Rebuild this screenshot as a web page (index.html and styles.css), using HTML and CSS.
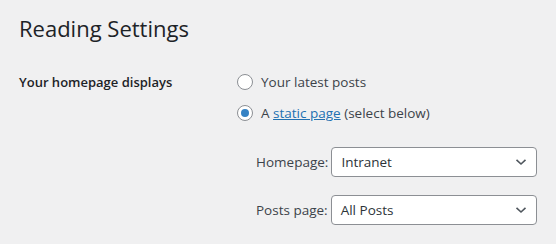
FILE: index.html
```html
<!DOCTYPE html>
<html lang="en">

<head>
    <meta charset="UTF-8">
    <meta name="viewport" content="width=device-width, initial-scale=1.0">
    <title>Reading Settings</title>
    <link rel="stylesheet" href="styles.css">
</head>

<body>
    <div class="wrap">
        <h1>Reading Settings</h1>
        <div class="form-row">
            <div class="row-label">Your homepage displays</div>
            <div class="row-field">
                <label class="choice">
                    <span class="radio"></span>
                    Your latest posts
                </label>
                <label class="choice">
                    <span class="radio checked"></span>
                    <span>A <a href="#">static page</a> (select below)</span>
                </label>
                <div class="page-selects">
                    <div class="select-row">
                        <span class="select-label">Homepage:</span>
                        <div class="select">
                            <span>Intranet</span>
                            <svg width="12" height="8" viewBox="0 0 12 8"><path d="M1.5 1.8 L6 6 L10.5 1.8" fill="none" stroke="#50575e" stroke-width="1.6"/></svg>
                        </div>
                    </div>
                    <div class="select-row">
                        <span class="select-label">Posts page:</span>
                        <div class="select">
                            <span>All Posts</span>
                            <svg width="12" height="8" viewBox="0 0 12 8"><path d="M1.5 1.8 L6 6 L10.5 1.8" fill="none" stroke="#50575e" stroke-width="1.6"/></svg>
                        </div>
                    </div>
                </div>
            </div>
        </div>
    </div>
</body>

</html>
```

FILE: styles.css
```css
body {
    background: #f0f0f1;
    color: #1d2327;
    font-family: "Open Sans", "Noto Sans", sans-serif;
    font-size: 13px;
    margin: 0;
}

.wrap {
    padding: 0 19px;
}

h1 {
    font-size: 22px;
    font-weight: 400;
    margin: 0;
    padding: 14px 0 0;
    line-height: 29px;
    color: #1d2327;
}

.form-row {
    display: flex;
    margin-top: 28px;
}

.row-label {
    width: 218px;
    font-weight: 600;
    font-size: 13px;
    line-height: 22px;
    color: #1d2327;
}

.row-field {
    display: flex;
    flex-direction: column;
    flex: 1;
}

.choice {
    display: flex;
    align-items: center;
    gap: 8px;
    height: 22px;
    margin-bottom: 9px;
    color: #3c434a;
    font-size: 13.5px;
}

.choice a {
    color: #2271b1;
}

.radio {
    width: 14px;
    height: 14px;
    border: 1px solid #8c8f94;
    border-radius: 50%;
    background: #fff;
    display: flex;
    align-items: center;
    justify-content: center;
}

.radio.checked::after {
    content: "";
    width: 8px;
    height: 8px;
    border-radius: 50%;
    background: #3582c4;
}

.page-selects {
    padding-left: 19px;
    margin-top: 14px;
    display: flex;
    flex-direction: column;
    gap: 18px;
}

.select-row {
    display: flex;
    align-items: center;
    gap: 3px;
    color: #3c434a;
    font-size: 13.5px;
}

.select {
    flex: 1;
    height: 28px;
    border: 1px solid #8c8f94;
    border-radius: 4px;
    background: #fff;
    display: flex;
    align-items: center;
    justify-content: space-between;
    padding: 0 9px 0 9px;
    color: #2c3338;
}
```
